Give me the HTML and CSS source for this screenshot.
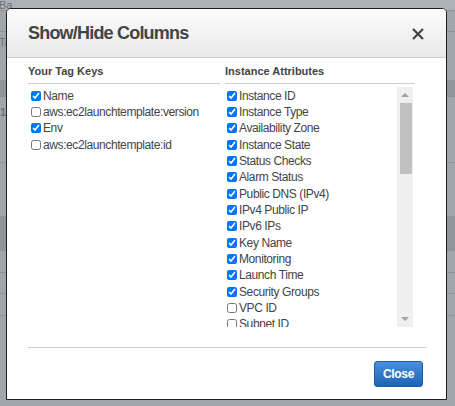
FILE: index.html
```html
<!DOCTYPE html>
<html>
<head>
<meta charset="utf-8">
<link rel="stylesheet" href="styles.css">
</head>
<body>
<div class="page">
  <div class="bg-row r1"><span class="bg-text">Ba</span></div>
  <div class="bg-row r2"></div>
  <div class="bg-row r3"><span class="bg-text">Ta</span></div>
  <div class="bg-row r4"></div>
  <div class="bg-row r5"><span class="bg-text">1</span></div>
  <div class="bg-row r6"></div>
  <div class="bg-row r7"></div>
  <div class="bg-row r8"></div>
  <div class="bg-row r9"></div>
  <div class="bg-row r10"></div>
  <div class="bg-row r11"></div>
</div>

<div class="modal">
  <div class="modal-header">
    <h2 class="modal-title">Show/Hide Columns</h2>
    <svg class="close-x" width="12" height="12" viewBox="0 0 12 12"><path d="M1 1 L11 11 M11 1 L1 11" stroke="#444" stroke-width="2.2" fill="none"/></svg>
  </div>
  <div class="modal-body">
    <div class="col col-left">
      <div class="col-heading">Your Tag Keys</div>
      <div class="list">
        <label class="item"><input type="checkbox" checked><span>Name</span></label>
        <label class="item"><input type="checkbox"><span>aws:ec2launchtemplate:version</span></label>
        <label class="item"><input type="checkbox" checked><span>Env</span></label>
        <label class="item"><input type="checkbox"><span>aws:ec2launchtemplate:id</span></label>
      </div>
    </div>
    <div class="col col-right">
      <div class="col-heading">Instance Attributes</div>
      <div class="scroll-box">
        <div class="list scroll-list">
          <label class="item"><input type="checkbox" checked><span>Instance ID</span></label>
          <label class="item"><input type="checkbox" checked><span>Instance Type</span></label>
          <label class="item"><input type="checkbox" checked><span>Availability Zone</span></label>
          <label class="item"><input type="checkbox" checked><span>Instance State</span></label>
          <label class="item"><input type="checkbox" checked><span>Status Checks</span></label>
          <label class="item"><input type="checkbox" checked><span>Alarm Status</span></label>
          <label class="item"><input type="checkbox" checked><span>Public DNS (IPv4)</span></label>
          <label class="item"><input type="checkbox" checked><span>IPv4 Public IP</span></label>
          <label class="item"><input type="checkbox" checked><span>IPv6 IPs</span></label>
          <label class="item"><input type="checkbox" checked><span>Key Name</span></label>
          <label class="item"><input type="checkbox" checked><span>Monitoring</span></label>
          <label class="item"><input type="checkbox" checked><span>Launch Time</span></label>
          <label class="item"><input type="checkbox" checked><span>Security Groups</span></label>
          <label class="item"><input type="checkbox"><span>VPC ID</span></label>
          <label class="item"><input type="checkbox"><span>Subnet ID</span></label>
        </div>
        <div class="scrollbar">
          <div class="sb-btn"><span class="tri-up"></span></div>
          <div class="sb-track"><div class="sb-thumb"></div></div>
          <div class="sb-btn"><span class="tri-down"></span></div>
        </div>
      </div>
    </div>
  </div>
  <div class="modal-footer">
    <button class="btn-close">Close</button>
  </div>
</div>
</body>
</html>
```

FILE: styles.css
```css
* { box-sizing: border-box; }
html, body { margin: 0; padding: 0; }
body {
  width: 455px;
  height: 406px;
  overflow: hidden;
  background: #a1a6aa;
  font-family: "Liberation Sans", Arial, sans-serif;
  position: relative;
}

.page { display: flex; flex-direction: column; }
.bg-row {
  background: #a1a6aa;
  border-bottom: 1px solid #8e9397;
  flex: none;
  font-size: 11px;
  color: #6f7478;
  padding-left: 0;
  overflow: hidden;
  white-space: nowrap;
}
.bg-text { display: block; margin-left: -1px; line-height: 11px; }
.r1 { height: 11px; background: #adb1b5; }
.r2 { height: 21px; }
.r3 { height: 48px; border-bottom: none; padding-top: 5px; }
.r4 { height: 17px; background: #90959a; }
.r5 { height: 66px; padding-top: 10px; font-weight: bold; padding-left: 1px; }
.r6 { height: 53px; border-bottom: none; }
.r7 { height: 35px; background: #90959a; border-bottom: none; }
.r8 { height: 22px; }
.r9 { height: 21px; }
.r10 { height: 22px; }
.r11 { height: 90px; border-bottom: none; }

.modal {
  position: absolute;
  left: 6px;
  top: 8px;
  width: 441px;
  height: 392px;
  background: #fff;
  border: 1px solid #1e1e1e;
  border-radius: 5px 5px 0 0;
  display: flex;
  flex-direction: column;
}

.modal-header {
  height: 49px;
  flex: none;
  padding: 0 22px 0 21px;
  display: flex;
  align-items: center;
  justify-content: space-between;
  background: linear-gradient(#fcfcfc, #e9e9e9);
  border-bottom: 1px solid #cdcdcd;
  border-radius: 4px 4px 0 0;
}
.modal-title {
  margin: 0;
  font-size: 18px;
  font-weight: bold;
  letter-spacing: -0.8px;
  color: #444;
}
.close-x { display: block; margin-top: 1px; }

.modal-body {
  padding: 0 19px 0 21px;
  display: grid;
  grid-template-columns: 192px 190px;
  column-gap: 5px;
  align-items: start;
}

.col-heading {
  height: 26px;
  padding-top: 6px;
  line-height: 14px;
  font-size: 11px;
  font-weight: bold;
  color: #444;
  border-bottom: 1px solid #cfcfcf;
}

.list { margin-top: 3px; display: flex; flex-direction: column; }
.item {
  height: 16.33px;
  flex: none;
  display: flex;
  align-items: center;
  gap: 2px;
  padding-top: 1px;
  font-size: 12px;
  letter-spacing: -0.4px;
  color: #444;
  white-space: nowrap;
}
.col-left .item { padding-left: 3px; }
.col-right .item { padding-left: 2px; }
.item input {
  width: 10px;
  height: 10px;
  margin: 0;
  flex: none;
}

.scroll-box {
  margin-top: 3px;
  height: 240px;
  display: flex;
  padding-right: 2px;
}
.scroll-list { margin-top: 0; flex: 1; overflow: hidden; }
.scrollbar {
  width: 16px;
  flex: none;
  background: #f0f0f0;
  display: flex;
  flex-direction: column;
}
.sb-btn {
  height: 16px;
  flex: none;
  display: flex;
  align-items: center;
  justify-content: center;
}
.tri-up {
  width: 0; height: 0;
  border-left: 4px solid transparent;
  border-right: 4px solid transparent;
  border-bottom: 4px solid #a3a3a3;
}
.tri-down {
  width: 0; height: 0;
  border-left: 4px solid transparent;
  border-right: 4px solid transparent;
  border-top: 4px solid #a3a3a3;
}
.sb-track { flex: 1; padding: 0 1px 0 3px; }
.sb-thumb { height: 71px; background: #c1c1c1; }

.modal-footer {
  margin: 20px 19px 0 21px;
  padding: 13px 4px 0 0;
  border-top: 1px solid #cfcfcf;
  display: flex;
  justify-content: flex-end;
}
.btn-close {
  width: 49px;
  height: 26px;
  padding: 0;
  border: 1px solid #1b5cab;
  border-radius: 3px;
  background: linear-gradient(#4891db, #1e62b6);
  color: #fff;
  font-family: "Liberation Sans", Arial, sans-serif;
  font-size: 12px;
  font-weight: bold;
  letter-spacing: -0.3px;
}
```
